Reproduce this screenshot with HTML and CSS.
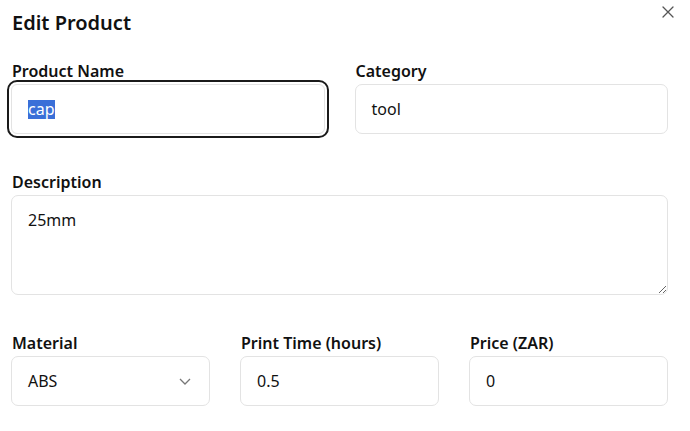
FILE: index.html
```html
<!DOCTYPE html>
<html lang="en">
<head>
<meta charset="utf-8">
<title>Edit Product</title>
<link rel="stylesheet" href="styles.css">
</head>
<body>
<div class="dialog">
  <button class="close" aria-label="Close">
    <svg width="12" height="12" viewBox="0 0 12 12"><path d="M1 1 L11 11 M11 1 L1 11" stroke="#555" stroke-width="1.3" fill="none" stroke-linecap="round"/></svg>
  </button>
  <h2 class="title">Edit Product</h2>
  <div class="row two">
    <div class="field">
      <label class="label">Product Name</label>
      <div class="input focused"><span class="sel">cap</span></div>
    </div>
    <div class="field">
      <label class="label">Category</label>
      <div class="input">tool</div>
    </div>
  </div>
  <div class="row">
    <div class="field">
      <label class="label">Description</label>
      <textarea class="textarea">25mm</textarea>
    </div>
  </div>
  <div class="row three">
    <div class="field">
      <label class="label">Material</label>
      <div class="input select"><span>ABS</span>
        <svg width="12" height="7" viewBox="0 0 12 7"><path d="M1 1 L6 6 L11 1" stroke="#777" stroke-width="1.3" fill="none"/></svg>
      </div>
    </div>
    <div class="field">
      <label class="label">Print Time (hours)</label>
      <div class="input">0.5</div>
    </div>
    <div class="field">
      <label class="label">Price (ZAR)</label>
      <div class="input">0</div>
    </div>
  </div>
</div>
</body>
</html>
```
FILE: styles.css
```css
html, body {
  margin: 0;
  padding: 0;
  background: #fff;
}
body {
  font-family: "Noto Sans", "Open Sans", sans-serif;
  color: #111;
  width: 690px;
  height: 431px;
  overflow: hidden;
}
.dialog {
  position: relative;
  padding: 9px 22px 0 11px;
}
.close {
  position: absolute;
  top: 6px;
  right: 16px;
  border: 0;
  background: none;
  padding: 0;
  width: 12px;
  height: 12px;
  display: flex;
}
.title {
  margin: 0 0 22px 1px;
  font-size: 20px;
  line-height: 28px;
  font-weight: 600;
}
.row {
  display: grid;
  column-gap: 30px;
  margin-bottom: 36px;
}
.row.two { grid-template-columns: 1fr 1fr; }
.row.three { grid-template-columns: 1fr 1fr 1fr; }
.field {
  display: flex;
  flex-direction: column;
}
.label {
  font-size: 16px;
  line-height: 24px;
  font-weight: 600;
  margin: 0 0 1px 1px;
}
.input {
  box-sizing: border-box;
  height: 50px;
  border: 1px solid #e3e3e3;
  border-radius: 7px;
  padding: 0 16px;
  display: flex;
  align-items: center;
  font-size: 16px;
  color: #111;
}
.input.focused {
  outline: 2px solid #1a1a1a;
  outline-offset: 2px;
  border-radius: 6px;
}
.sel {
  background: #3a6fd8;
  color: #fff;
  line-height: 19px;
}
.select {
  justify-content: space-between;
  padding-right: 18px;
}
.textarea {
  box-sizing: border-box;
  height: 100px;
  border: 1px solid #e3e3e3;
  border-radius: 7px;
  padding: 12px 16px;
  font-family: inherit;
  font-size: 16px;
  line-height: 24px;
  color: #111;
  resize: vertical;
  outline: none;
  margin: 0;
}
```
